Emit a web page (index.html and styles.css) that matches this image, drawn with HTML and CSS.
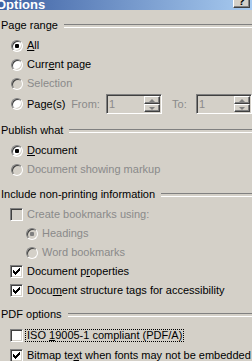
FILE: index.html
```html
<!DOCTYPE html>
<html lang="en">
<head>
    <meta charset="UTF-8">
    <title>Options</title>
    <link rel="stylesheet" href="styles.css">
</head>
<body>
    <div class="titlebar">
        <span class="title">Options</span>
        <span class="caption-btn">?</span>
    </div>

    <div class="group">
        <div class="group-head">Page range</div>
        <div class="row"><span class="radio checked"></span><span class="label"><u>A</u>ll</span></div>
        <div class="row"><span class="radio"></span><span class="label">Curr<u>e</u>nt page</span></div>
        <div class="row disabled"><span class="radio"></span><span class="label">Selection</span></div>
        <div class="row pages">
            <span class="radio"></span>
            <span class="label pages-label">Pa<u>g</u>e(s)</span>
            <span class="spin-label from">From:</span>
            <div class="spin">
                <span class="spin-val">1</span>
                <span class="spin-btns">
                    <span class="spin-btn"><i class="arrow up"></i></span>
                    <span class="spin-btn"><i class="arrow down"></i></span>
                </span>
            </div>
            <span class="spin-label to">To:</span>
            <div class="spin">
                <span class="spin-val">1</span>
                <span class="spin-btns">
                    <span class="spin-btn"><i class="arrow up"></i></span>
                    <span class="spin-btn"><i class="arrow down"></i></span>
                </span>
            </div>
        </div>
    </div>

    <div class="group">
        <div class="group-head">Publish what</div>
        <div class="row"><span class="radio checked"></span><span class="label"><u>D</u>ocument</span></div>
        <div class="row disabled"><span class="radio"></span><span class="label">Document showing markup</span></div>
    </div>

    <div class="group">
        <div class="group-head">Include non-printing information</div>
        <div class="row check disabled"><span class="checkbox"></span><span class="label">Create bookmarks using:</span></div>
        <div class="row sub disabled"><span class="radio checked"></span><span class="label">Headings</span></div>
        <div class="row sub disabled"><span class="radio"></span><span class="label">Word bookmarks</span></div>
        <div class="row check">
            <span class="checkbox checked"><svg width="7" height="7" viewBox="0 0 7 7"><path d="M0 2h1v3H0zM1 3h1v3H1zM2 4h1v3H2zM3 3h1v3H3zM4 2h1v3H4zM5 1h1v3H5zM6 0h1v3H6z"/></svg></span>
            <span class="label">Document p<u>r</u>operties</span>
        </div>
        <div class="row check">
            <span class="checkbox checked"><svg width="7" height="7" viewBox="0 0 7 7"><path d="M0 2h1v3H0zM1 3h1v3H1zM2 4h1v3H2zM3 3h1v3H3zM4 2h1v3H4zM5 1h1v3H5zM6 0h1v3H6z"/></svg></span>
            <span class="label">Docu<u>m</u>ent structure tags for accessibility</span>
        </div>
    </div>

    <div class="group pdf">
        <div class="group-head">PDF options</div>
        <div class="row check">
            <span class="checkbox"></span>
            <span class="label focused">ISO <u>1</u>9005-1 compliant (PDF/A)</span>
        </div>
        <div class="row check">
            <span class="checkbox checked"><svg width="7" height="7" viewBox="0 0 7 7"><path d="M0 2h1v3H0zM1 3h1v3H1zM2 4h1v3H2zM3 3h1v3H3zM4 2h1v3H4zM5 1h1v3H5zM6 0h1v3H6z"/></svg></span>
            <span class="label">Bitmap te<u>x</u>t when fonts may not be embedded</span>
        </div>
    </div>
</body>
</html>
```

FILE: styles.css
```css
* {
    box-sizing: border-box;
}
html, body {
    margin: 0;
}
body {
    width: 252px;
    height: 361px;
    overflow: hidden;
    background-color: #D4D0C8;
    font-family: "Liberation Sans", Arial, sans-serif;
    font-size: 11px;
    color: #000;
}

/* title bar, cut off at the top */
.titlebar {
    height: 10px;
    display: flex;
    align-items: flex-end;
    justify-content: space-between;
    overflow: hidden;
    background: linear-gradient(to right, #3F62A4, #A8CBF0);
}
.title {
    color: #FFF;
    font-weight: bold;
    font-size: 13px;
    line-height: 14px;
    margin: 0 0 -2px -4px;
    white-space: nowrap;
}
.caption-btn {
    width: 17px;
    height: 14px;
    margin: 0 2px 2px 0;
    flex: none;
    background-color: #D4D0C8;
    border: 1px solid;
    border-color: #FFF #404040 #404040 #FFF;
    box-shadow: inset -1px -1px #808080;
    font-weight: bold;
    font-size: 11px;
    line-height: 12px;
    text-align: center;
}

/* group boxes */
.group {
    margin-top: 9px;
}
.group:first-of-type,
.group.pdf {
    margin-top: 8px;
}
.group-head {
    display: flex;
    align-items: center;
    height: 13px;
    line-height: 13px;
    margin-bottom: 4px;
    padding-left: 1px;
    white-space: nowrap;
}
.group-head::after {
    content: "";
    flex: 1;
    height: 2px;
    margin-left: 6px;
    border-top: 1px solid #808080;
    border-bottom: 1px solid #FFF;
}

.row {
    display: flex;
    align-items: center;
    height: 19px;
    padding-left: 11px;
    white-space: nowrap;
}
.row.check {
    padding-left: 10px;
}
.row.sub {
    padding-left: 26px;
}
.row.pages {
    height: 22px;
}
.pdf .row {
    height: 20px;
}
.label {
    margin-left: 4px;
    line-height: 13px;
}
.disabled .label {
    color: #8A8A8A;
}

/* radio buttons */
.radio {
    width: 12px;
    height: 12px;
    flex: none;
    border-radius: 50%;
    background-color: #FFF;
    border: 1px solid;
    border-color: #808080 #FFF #FFF #808080;
    box-shadow: inset 1px 1px #404040, inset -1px -1px #D4D0C8;
    display: flex;
    align-items: center;
    justify-content: center;
}
.radio.checked::after {
    content: "";
    width: 4px;
    height: 4px;
    border-radius: 1px;
    background-color: #000;
}
.disabled .radio {
    background-color: #D4D0C8;
}
.disabled .radio.checked::after {
    background-color: #808080;
}

/* check boxes */
.checkbox {
    width: 13px;
    height: 13px;
    flex: none;
    background-color: #FFF;
    border: 1px solid;
    border-color: #808080 #FFF #FFF #808080;
    box-shadow: inset 1px 1px #404040, inset -1px -1px #D4D0C8;
    display: flex;
    align-items: center;
    justify-content: center;
}
.checkbox svg {
    shape-rendering: crispEdges;
}
.disabled .checkbox {
    background-color: #D4D0C8;
}
.label.focused {
    margin-left: 2px;
    padding: 0 1px;
    border: 1px dotted #000;
    line-height: 11px;
}

/* page range spinners */
.pages-label {
    width: 48px;
}
.spin-label {
    color: #8A8A8A;
}
.spin-label.from {
    width: 38px;
}
.spin-label.to {
    width: 26px;
    margin-left: 10px;
}
.spin {
    width: 56px;
    height: 20px;
    flex: none;
    display: flex;
    align-items: stretch;
    border: 1px solid;
    border-color: #808080 #FFF #FFF #808080;
    box-shadow: inset 1px 1px #404040, inset -1px -1px #D4D0C8;
    padding: 1px;
}
.spin-val {
    flex: 1;
    padding-left: 1px;
    line-height: 16px;
    color: #8A8A8A;
}
.spin-btns {
    width: 16px;
    display: flex;
    flex-direction: column;
}
.spin-btn {
    flex: 1;
    display: flex;
    align-items: center;
    justify-content: center;
    background-color: #D4D0C8;
    border: 1px solid;
    border-color: #FFF #404040 #404040 #FFF;
    box-shadow: inset -1px -1px #808080;
}
.arrow {
    width: 0;
    height: 0;
    border-left: 3px solid transparent;
    border-right: 3px solid transparent;
}
.arrow.up {
    border-bottom: 3px solid #808080;
}
.arrow.down {
    border-top: 3px solid #808080;
}
```
